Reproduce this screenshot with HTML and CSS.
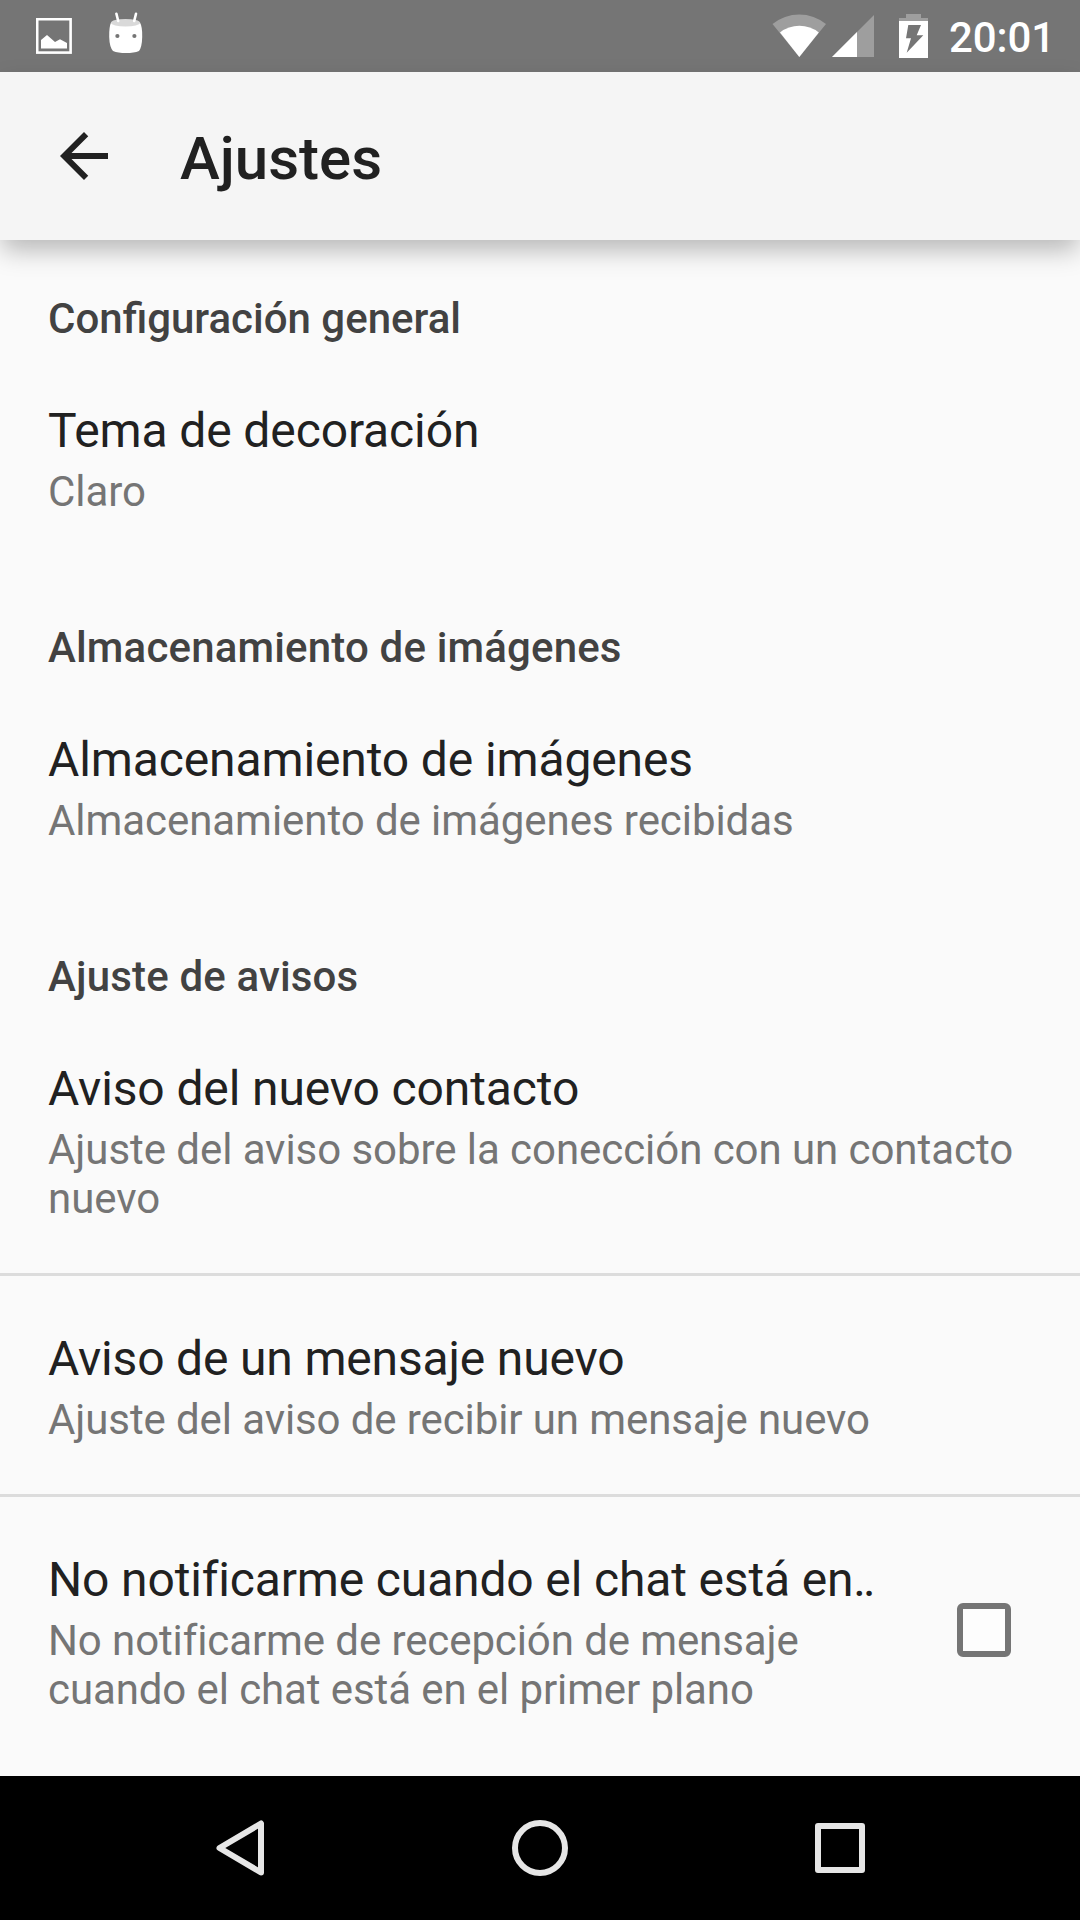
FILE: index.html
```html
<!DOCTYPE html>
<html lang="es">
<head>
<meta charset="utf-8">
<title>Ajustes</title>
<link rel="stylesheet" href="styles.css">
</head>
<body>
<div class="screen">
  <header class="status">
    <div class="status-left">
      <svg class="picture" width="36" height="36" viewBox="0 0 36 36"><rect x="1.2" y="1.2" width="33.400" height="33.400" fill="none" stroke="#fff" stroke-width="2.600"/><path d="M5 30.500V22L11 17L19 24L24 21.300L31 25V30.500Z" fill="#fff"/></svg>
      <svg class="robot" width="36" height="42" viewBox="0 0 36 42"><path d="M3 10.500H32Q34.500 15 34.200 25Q34 35 31 39Q26 41 18 41T5 39Q1.500 35 1.200 25Q1 15 3 10.500Z" fill="#fff"/><ellipse cx="17.500" cy="10.700" rx="14.500" ry="3.800" fill="#d9d9d9"/><path d="M8.400 1.800L10.200 9M28 1.800L26.200 9" stroke="#fff" stroke-width="2.600" stroke-linecap="round"/><circle cx="9.400" cy="24" r="2.100" fill="#757575"/><circle cx="26.400" cy="24" r="2.100" fill="#757575"/></svg>
    </div>
    <div class="status-right">
      <svg class="wifi" width="55" height="44" viewBox="0 0 55 44"><path d="M.5 10A42.500 42.500 0 0 1 54 10L27.300 43Z" fill="#9e9e9e"/><path d="M8 18.500A31.500 31.500 0 0 1 46.800 18.500L27.300 43Z" fill="#fff"/></svg>
      <svg class="signal" width="42" height="44" viewBox="0 0 42 44"><path d="M0 43L42 1V43Z" fill="#9e9e9e"/><path d="M0 43L25 18V43Z" fill="#fff"/></svg>
      <svg class="battery" width="29" height="44" viewBox="0 0 29 44"><path d="M7 0H22V4H29V8H0V4H7Z" fill="#9e9e9e"/><path d="M0 7H29V44H0Z" fill="#fff"/><path d="M9.300 11H22L17.700 21.300H24.300L7.700 38.700L12 24.300H7Z" fill="#757575"/></svg>
      <span class="clock">20:01</span>
    </div>
  </header>
  <div class="appbar">
    <svg class="back" width="48" height="48" viewBox="4 4 16 16"><path d="M20 11H7.830l5.590-5.590L12 4l-8 8 8 8 1.410-1.410L7.830 13H20v-2z" fill="#212121"/></svg>
    <h1>Ajustes</h1>
  </div>
  <main class="settings">
    <section>
      <h2>Configuración general</h2>
      <div class="item"><div class="title">Tema de decoración</div><div class="summary">Claro</div></div>
    </section>
    <section>
      <h2 class="loose">Almacenamiento de imágenes</h2>
      <div class="item"><div class="title">Almacenamiento de imágenes</div><div class="summary">Almacenamiento de imágenes recibidas</div></div>
    </section>
    <section>
      <h2 class="loose">Ajuste de avisos</h2>
      <div class="item tall"><div class="title">Aviso del nuevo contacto</div><div class="summary">Ajuste del aviso sobre la conección con un contacto<br>nuevo</div></div>
      <div class="item ruled tight"><div class="title">Aviso de un mensaje nuevo</div><div class="summary">Ajuste del aviso de recibir un mensaje nuevo</div></div>
      <div class="item ruled choice"><div><div class="title">No notificarme cuando el chat está en<span class="dots">..</span></div><div class="summary">No notificarme de recepción de mensaje<br>cuando el chat está en el primer plano</div></div><span class="checkbox"></span></div>
    </section>
  </main>
  <nav class="navbar">
    <svg width="720" height="60" viewBox="0 0 720 60"><g fill="none" stroke="#e6e6e6" stroke-width="6" stroke-linejoin="round"><path d="M39.500 30L81 5.500V54.500Z"/><circle cx="360" cy="30" r="25"/><rect x="638" y="8" width="44" height="44"/></g></svg>
  </nav>
</div>
</body>
</html>
```
FILE: styles.css
```css
* { box-sizing: border-box; }
body { margin: 0; font-family: Roboto, sans-serif; background: #fafafa; }
.screen { width: 1080px; height: 1920px; display: flex; flex-direction: column; overflow: hidden; }
.status { height: 72px; flex: none; background: #757575; display: flex; justify-content: space-between; }
.status-left, .status-right { display: flex; }
.status-left { padding-left: 36px; }
.picture { margin-top: 18px; }
.robot { margin: 12px 0 0 36px; }
.status-right { width: 308px; }
.wifi, .signal, .battery { margin-top: 14px; flex: none; }
.signal { margin-left: 5px; }
.battery { margin-left: 25px; }
.clock { margin-left: 21px; color: #fff; font-size: 42px; line-height: 76px; font-weight: 500; letter-spacing: -.1px; }
.appbar { height: 168px; flex: none; background: #f5f5f5; display: flex; align-items: center; padding-left: 60px; box-shadow: 0 12px 24px -2px rgba(0,0,0,.27); }
h1 { margin: 5px 0 0 72px; font-size: 60px; line-height: 70px; font-weight: 500; color: #212121; }
.settings { flex: 1; color: #212121; padding-top: 15px; }
h2 { margin: 0; height: 126px; padding: 39px 48px 0; font-size: 42px; line-height: 49px; font-weight: 500; color: #424242; }
.loose { letter-spacing: .16px; }
.item { padding: 21px 48px 0; height: 203px; }
.title { font-size: 48px; line-height: 57px; letter-spacing: -.12px; white-space: nowrap; }
.summary { margin-top: 8px; font-size: 42px; line-height: 49px; letter-spacing: -.06px; color: #757575; white-space: nowrap; }
.tall { height: 234px; }
.ruled { height: 221px; padding-top: 54px; border-top: 3px solid #dcdcdc; }
.tight .title { letter-spacing: -.17px; }
.tight .summary, .choice .summary { letter-spacing: -.1px; }
.choice { display: flex; justify-content: space-between; padding-right: 69px; }
.choice .title { letter-spacing: -.15px; }
.choice .dots { letter-spacing: -3px; }
.checkbox { width: 54px; height: 54px; margin-top: 52px; border: 6px solid #757575; border-radius: 6px; background: #fdfdfd; }
.navbar { height: 144px; flex: none; background: #000; display: flex; align-items: center; justify-content: center; }
```
